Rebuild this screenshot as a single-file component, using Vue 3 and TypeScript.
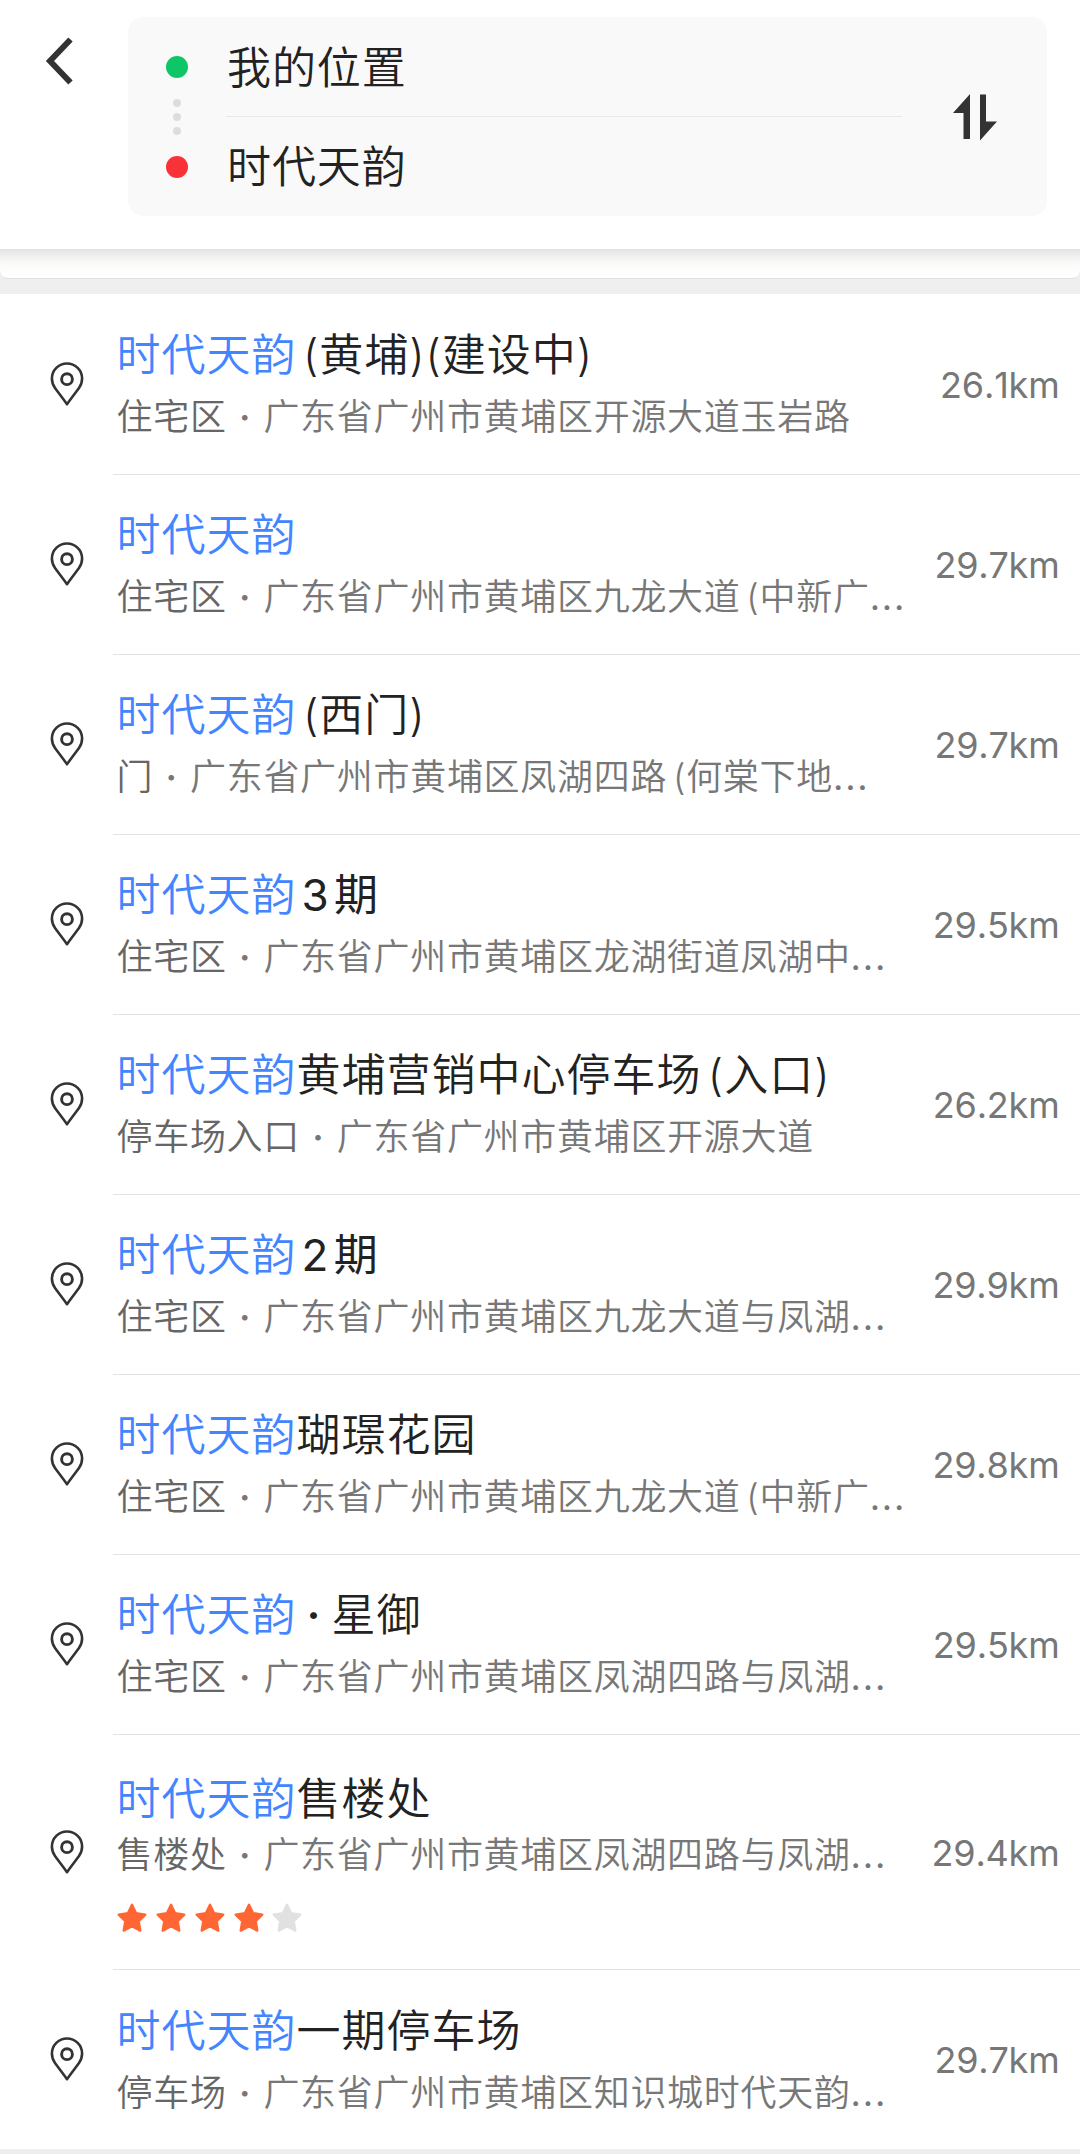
<script setup lang="ts">
interface Place {
  rest: string
  phase?: string
  dotted?: string
  kind: string
  address: string
  clipped?: boolean
  distance: string
  stars?: number
}

const keyword = '时代天韵'

const places: Place[] = [
  { rest: ' (黄埔)(建设中)', kind: '住宅区', address: '广东省广州市黄埔区开源大道玉岩路', distance: '26.1km' },
  { rest: '', kind: '住宅区', address: '广东省广州市黄埔区九龙大道 (中新广', clipped: true, distance: '29.7km' },
  { rest: ' (西门)', kind: '门', address: '广东省广州市黄埔区凤湖四路 (何棠下地', clipped: true, distance: '29.7km' },
  { rest: '', phase: ' 3 期', kind: '住宅区', address: '广东省广州市黄埔区龙湖街道凤湖中', clipped: true, distance: '29.5km' },
  { rest: '黄埔营销中心停车场 (入口)', kind: '停车场入口', address: '广东省广州市黄埔区开源大道', distance: '26.2km' },
  { rest: '', phase: ' 2 期', kind: '住宅区', address: '广东省广州市黄埔区九龙大道与凤湖', clipped: true, distance: '29.9km' },
  { rest: '瑚璟花园', kind: '住宅区', address: '广东省广州市黄埔区九龙大道 (中新广', clipped: true, distance: '29.8km' },
  { rest: '', dotted: '星御', kind: '住宅区', address: '广东省广州市黄埔区凤湖四路与凤湖', clipped: true, distance: '29.5km' },
  { rest: '售楼处', kind: '售楼处', address: '广东省广州市黄埔区凤湖四路与凤湖', clipped: true, distance: '29.4km', stars: 4 },
  { rest: '一期停车场', kind: '停车场', address: '广东省广州市黄埔区知识城时代天韵', clipped: true, distance: '29.7km' },
]
</script>

<template>
  <div class="page">
    <header class="header">
      <svg class="back" width="30" height="50" viewBox="0 0 30 50">
        <path d="M25.500 3.500L5 25L25.500 46.500" fill="none" stroke="#333" stroke-width="6" />
      </svg>
      <div class="route">
        <div class="marks">
          <i class="end start"></i>
          <span class="trail"><i></i><i></i><i></i></span>
          <i class="end finish"></i>
        </div>
        <div class="fields">
          <div class="field">我的位置</div>
          <div class="field">时代天韵</div>
        </div>
        <svg class="swap" width="44" height="48" viewBox="0 0 44 48">
          <path d="M17 1V46H10.500V20H0zM27 1.500H33V28.500H44L27 47.500z" fill="#333" />
        </svg>
      </div>
    </header>
    <div class="strip"><div class="sheet"></div></div>
    <ul class="list">
      <li v-for="(p, i) in places" :key="i" class="row" :class="{ rated: p.stars }">
        <svg class="pin" width="36" height="46" viewBox="0 0 36 46">
          <path
            d="M18 43.200C14 37.500 9.500 31.800 6 27C3.800 24 2.900 21 2.900 17.600A15.100 15.100 0 0 1 33.100 17.600C33.100 21 32.200 24 30 27C26.500 31.800 22 37.500 18 43.200z"
            fill="none" stroke="#333" stroke-width="2.600" stroke-linejoin="round" />
          <circle cx="18" cy="18.200" r="5.400" fill="none" stroke="#333" stroke-width="2.900" />
        </svg>
        <div class="body">
          <div class="info">
            <div class="title"><span class="hit">{{ keyword }}</span><span class="rest">{{ p.rest }}</span><span v-if="p.phase" class="phase">{{ p.phase }}</span><template v-if="p.dotted"><span class="dot">·</span>{{ p.dotted }}</template></div>
            <div class="sub"><span class="kind">{{ p.kind }}</span><span class="dot">·</span><span class="rest">{{ p.address }}</span><span v-if="p.clipped" class="more">...</span></div>
            <div v-if="p.stars" class="stars">
              <svg v-for="n in 5" :key="n" width="30" height="30" viewBox="0 0 30 30">
                <path
                  d="M15 1.800L19.100 10.200L28.300 11.600L21.700 18.200L23.300 27.600L15 23.300L6.700 27.600L8.300 18.200L1.700 11.600L10.900 10.200z"
                  :fill="n <= p.stars ? '#ff6633' : '#e1e1e1'" :stroke="n <= p.stars ? '#ff6633' : '#e1e1e1'"
                  stroke-width="2.400" stroke-linejoin="round" />
              </svg>
            </div>
          </div>
          <div class="distance">{{ p.distance }}</div>
        </div>
      </li>
    </ul>
  </div>
</template>

<style>
body {
  margin: 0;
  background: #fff;
}
</style>

<style scoped>
.page {
  width: 1080px;
  height: 2154px;
  overflow: hidden;
  display: flex;
  flex-direction: column;
  background: #eee;
  font-family: Inter, 'Noto Sans CJK SC', sans-serif;
  font-weight: 350;
}
.header {
  box-sizing: border-box;
  height: 249px;
  flex: none;
  display: flex;
  align-items: flex-start;
  padding: 17px 33px 0 45px;
  background: #fff;
}
.back {
  margin: 19px 53px 0 0;
}
.route {
  box-sizing: border-box;
  flex: 1;
  height: 199px;
  display: flex;
  align-items: center;
  padding: 0 50px 0 38px;
  border-radius: 15px;
  background: #f9f9f9;
}
.marks {
  width: 22px;
  height: 122px;
  display: flex;
  flex-direction: column;
  align-items: center;
  justify-content: space-between;
}
.end {
  width: 22px;
  height: 22px;
  border-radius: 50%;
}
.start {
  background: #0fc667;
}
.finish {
  background: #f93237;
}
.trail {
  display: flex;
  flex-direction: column;
  gap: 6px;
}
.trail i {
  width: 8px;
  height: 8px;
  border-radius: 50%;
  background: #ddd;
}
.fields {
  width: 676px;
  margin: 0 50px 1px 38px;
}
.field {
  height: 98px;
  line-height: 100px;
  padding-left: 1px;
  font-size: 44px;
  letter-spacing: 0.9px;
  color: #222;
}
.field + .field {
  border-top: 1px solid #e9e9e9;
}
.swap {
  margin-left: 1px;
}
.strip {
  flex: none;
  height: 45px;
  background: #efefef;
}
.sheet {
  box-sizing: border-box;
  height: 30px;
  border-bottom: 1px solid #dfe1e6;
  border-radius: 0 0 8px 8px;
  background: linear-gradient(#e3e3e3, #f1f1f0 8px, #fafaf9 15px, #fff 24px);
}
.list {
  flex: none;
  margin: 0;
  padding: 1px 0 0;
  list-style: none;
  background: #fff;
}
.row {
  height: 180px;
  display: flex;
  align-items: center;
}
.row.rated {
  height: 235px;
}
.row:last-child {
  height: 179px;
}
.pin {
  flex: none;
  margin: 0 28.500px 2px 48.500px;
}
.body {
  box-sizing: border-box;
  flex: 1;
  height: 100%;
  display: flex;
  align-items: center;
  justify-content: space-between;
  padding: 0 20.500px 0 3.500px;
  border-bottom: 1px solid #e3e3e3;
}
.row:last-child .body {
  border-bottom: none;
}
.info {
  align-self: flex-start;
  padding-top: 34px;
  white-space: pre;
}
.title {
  height: 52px;
  line-height: 53px;
  font-size: 44px;
  letter-spacing: 1px;
  word-spacing: -7px;
  color: #222;
}
.phase {
  word-spacing: -7.500px;
  letter-spacing: 0.2px;
  font-weight: 380;
}
.hit {
  color: #4285ff;
}
.sub {
  height: 44px;
  line-height: 44px;
  margin-top: 14px;
  font-size: 36px;
  letter-spacing: 0.7px;
  word-spacing: -5px;
  color: #777;
}
.kind {
  color: #666;
}
.dot {
  display: inline-block;
  width: 36.800px;
  text-align: center;
  font-weight: 600;
}
.title .dot {
  width: 35px;
}
.more {
  letter-spacing: 1.800px;
  font-weight: 400;
}
.rated .info {
  padding-top: 37px;
}
.rated .sub {
  margin-top: 9px;
}
.rated .title {
  line-height: 54px;
}
.row:last-child .info {
  padding-top: 35px;
}
.stars {
  display: flex;
  gap: 8.800px;
  margin: 26px 0 0 0.700px;
}
.distance {
  padding-top: 1px;
  font-size: 36px;
  font-weight: 380;
  font-kerning: none;
  letter-spacing: -0.2px;
  color: #777;
}
</style>
